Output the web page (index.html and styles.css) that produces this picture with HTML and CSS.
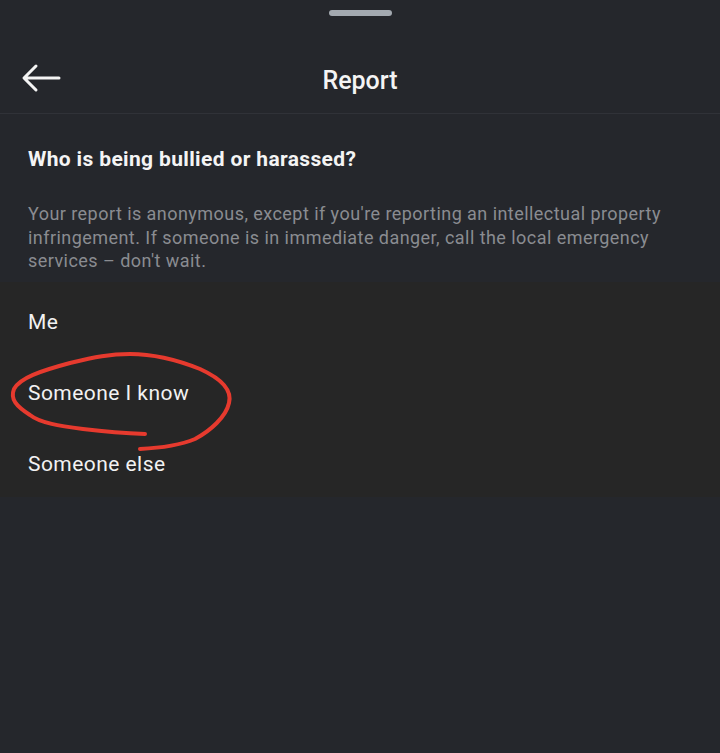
FILE: index.html
```html
<!DOCTYPE html>
<html>
<head>
<meta charset="utf-8">
<link rel="stylesheet" href="styles.css">
</head>
<body>
<div class="sheet">
  <div class="grip"><div class="handle"></div></div>
  <header class="header">
    <svg class="back" width="40" height="30" viewBox="0 0 40 30">
      <path d="M38 15 H4 M15 3 L3 15 L15 27" fill="none" stroke="#f4f4f4" stroke-width="3" stroke-linecap="round" stroke-linejoin="round"/>
    </svg>
    <h1 class="title">Report</h1>
  </header>
  <section class="intro">
    <h2 class="question">Who is being bullied or harassed?</h2>
    <p class="desc">Your report is anonymous, except if you're reporting an intellectual property infringement. If someone is in immediate danger, call the local emergency services – don't wait.</p>
  </section>
  <ul class="options">
    <li class="option">Me</li>
    <li class="option">Someone I know</li>
    <li class="option">Someone else</li>
    <svg class="scribble" width="240" height="110" viewBox="0 0 240 110">
      <path d="M145 83 C120 82 100 80 83 78 C60 75 40 72 30 64 C16 55 10 48 14 38 C20 27 40 20 70 12 C95 6 110 3 130 3 C150 3 175 8 200 18 C222 28 232 40 229 52 C226 66 210 80 195 88 C178 95 160 97 140 98" fill="none" stroke="#e63a2e" stroke-width="4" stroke-linecap="round" stroke-linejoin="round"/>
    </svg>
  </ul>
</div>
</body>
</html>
```
FILE: styles.css
```css
html, body {
  margin: 0;
  padding: 0;
  background: #25272c;
}
.sheet {
  width: 720px;
  height: 753px;
  background: #25272c;
  font-family: Roboto, "Noto Sans", sans-serif;
  color: #f2f2f2;
  overflow: hidden;
}
.grip {
  display: flex;
  justify-content: center;
  padding-top: 10px;
}
.handle {
  width: 63px;
  height: 6px;
  border-radius: 3px;
  background: #a3a9b0;
}
.header {
  position: relative;
  height: 97px;
  display: flex;
  align-items: center;
  justify-content: center;
  border-bottom: 1px solid #303238;
}
.back {
  position: absolute;
  left: 21px;
  top: 47px;
}
.title {
  margin: 0;
  font-size: 25px;
  font-weight: 500;
  color: #f4f4f4;
  padding-top: 31px;
}
.intro {
  padding: 31px 28px 0;
  height: 168px;
  box-sizing: border-box;
}
.question {
  margin: 0;
  font-size: 21px;
  line-height: 28px;
  font-weight: 700;
  letter-spacing: 0.35px;
  color: #f4f4f4;
}
.desc {
  margin: 29px 0 0;
  font-size: 18px;
  line-height: 23.5px;
  letter-spacing: 0.45px;
  color: #8a8c91;
}
.options {
  position: relative;
  list-style: none;
  margin: 0;
  padding: 4px 0 0;
  background: #262626;
  height: 215px;
  box-sizing: border-box;
}
.option {
  height: 71px;
  display: flex;
  align-items: center;
  padding-left: 28px;
  font-size: 21px;
  letter-spacing: 0.45px;
  color: #f2f2f2;
}
.scribble {
  position: absolute;
  left: 0;
  top: 69px;
}
```
